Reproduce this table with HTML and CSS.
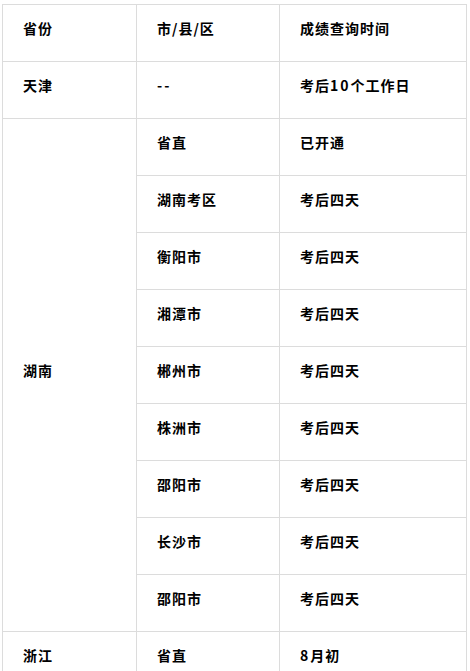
FILE: index.html
```html
<!DOCTYPE html>
<html lang="zh">
<head>
<meta charset="utf-8">
<link rel="stylesheet" href="styles.css">
</head>
<body>
<table class="grid">
  <colgroup>
    <col class="c1"><col class="c2"><col class="c3">
  </colgroup>
  <tr><td>省份</td><td>市/县/区</td><td>成绩查询时间</td></tr>
  <tr><td>天津</td><td><span class="num">--</span></td><td>考后<span class="num">10</span>个工作日</td></tr>
  <tr><td rowspan="9">湖南</td><td>省直</td><td>已开通</td></tr>
  <tr><td>湖南考区</td><td>考后四天</td></tr>
  <tr><td>衡阳市</td><td>考后四天</td></tr>
  <tr><td>湘潭市</td><td>考后四天</td></tr>
  <tr><td>郴州市</td><td>考后四天</td></tr>
  <tr><td>株洲市</td><td>考后四天</td></tr>
  <tr><td>邵阳市</td><td>考后四天</td></tr>
  <tr><td>长沙市</td><td>考后四天</td></tr>
  <tr><td>邵阳市</td><td>考后四天</td></tr>
  <tr><td>浙江</td><td>省直</td><td><span class="num">8</span>月初</td></tr>
</table>
</body>
</html>
```
FILE: styles.css
```css
html, body {
  margin: 0;
  padding: 0;
  background: #fff;
}
body {
  padding: 4px 0 0 2px;
  font-family: "Noto Sans CJK SC", "Noto Sans", sans-serif;
  font-size: 14px;
  font-weight: 700;
  color: #000;
}
.grid {
  border-collapse: collapse;
  table-layout: fixed;
  width: 464px;
}
.c1 { width: 134px; }
.c2 { width: 143px; }
.c3 { width: 187px; }
.grid td {
  border: 1px solid #dcdcdc;
  height: 57px;
  box-sizing: border-box;
  padding: 0 20px 10px 20px;
  vertical-align: middle;
  line-height: 20px;
  letter-spacing: 1px;
  white-space: nowrap;
}
.num {
  letter-spacing: 2px;
}
```
